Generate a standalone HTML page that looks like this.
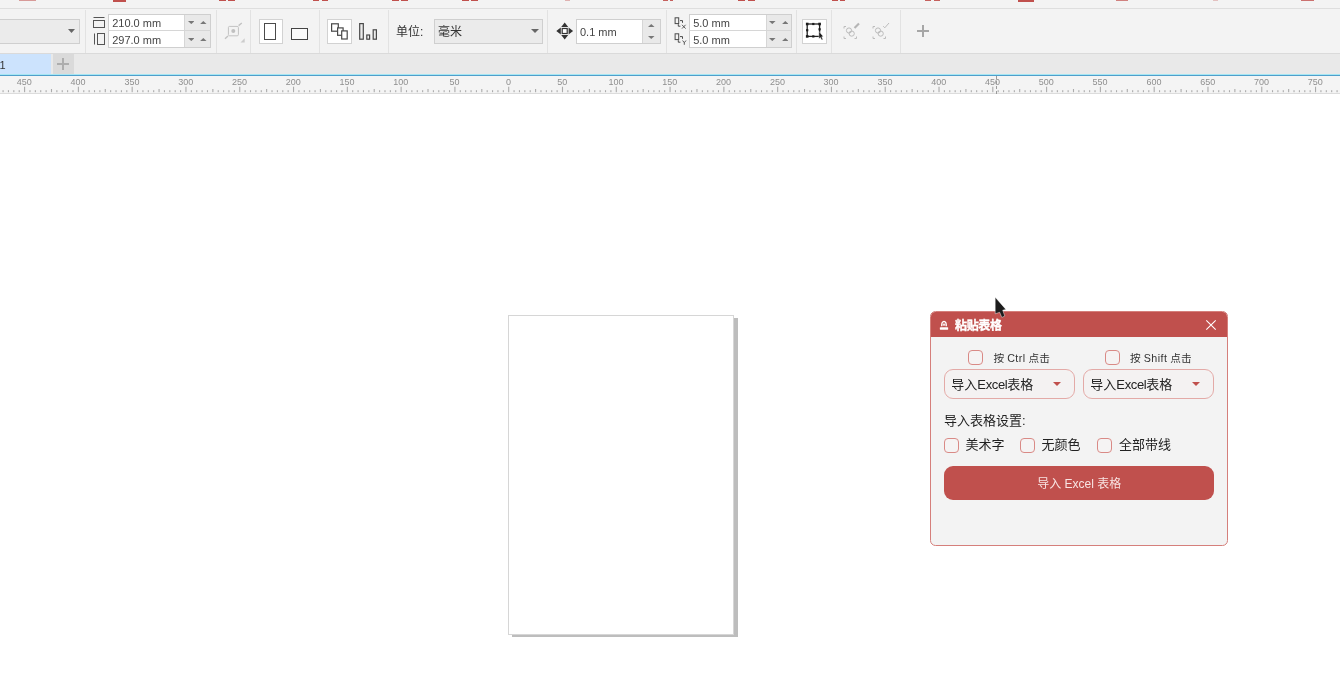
<!DOCTYPE html>
<html lang="zh-CN">
<head>
<meta charset="utf-8">
<title>粘贴表格</title>
<style>
*{box-sizing:border-box;margin:0;padding:0}
html,body{width:1340px;height:686px;overflow:hidden;background:#fff}
body{position:relative;font-family:"Liberation Sans","Noto Sans CJK SC",sans-serif;color:#333;font-size:12px}
.abs{position:absolute}
#root{left:0;top:0;width:1340px;height:686px;will-change:transform}
#top{left:0;top:0;width:1340px;height:53px;background:#f3f3f3}
#topline{left:0;top:8px;width:1340px;height:1px;background:#dedede}
#tbline{left:0;top:53px;width:1340px;height:1px;background:#dadada}
.red{top:0;height:2px;background:#c0504d}
.sep{top:10px;width:1px;height:43px;background:#e2e2e2}
#tabs{left:0;top:54px;width:1340px;height:20px;background:#e9e9e9}
#tab1{left:0;top:54px;width:51px;height:20px;background:#cce3fd}
#tabplus{left:53px;top:54px;width:21px;height:20px;background:#dadada}
#blue1{left:0;top:74px;width:1340px;height:1px;background:#a6e6f3}
#blue2{left:0;top:75px;width:1340px;height:1px;background:#4f9fcb}
#ruler{left:0;top:76px;width:1340px;height:18px;background:#f4f4f4;border-bottom:1px solid #dcdcdc}
.rl{top:76.5px;width:30px;text-align:center;font-size:9px;line-height:10px;color:#8e8e8e}
.combo{background:#ebebeb;border:1px solid #cfcfcf}
.inp{background:#fff;border:1px solid #cfcfcf}
.spin{background:#e9e9e9;border:1px solid #cfcfcf}
.tt{font-size:11px;line-height:12px;color:#444;white-space:nowrap}
.selbtn{background:#fff;border:1px solid #d2d2d2}
/* page */
#pshadow1{left:734.3px;top:317.7px;width:4px;height:319.2px;background:#bdbdbd}
#pshadow2{left:512.3px;top:634.4px;width:226px;height:2.8px;background:#bdbdbd}
#page{left:507.7px;top:314.5px;width:226.6px;height:320px;background:#fff;border:1px solid #d6d6d6}
/* dialog */
#dlg{left:930px;top:311px;width:298px;height:234.6px;border:1px solid #d57f7b;border-radius:5.5px;background:#f3f3f3;overflow:hidden}
#dlgtitle{left:0;top:0;width:298px;height:25.2px;background:#c0504d}
#dlgtitle .t{left:24px;top:7.3px;letter-spacing:-0.35px;-webkit-text-stroke:0.35px #fff;font-size:12px;line-height:14px;font-weight:bold;color:#fff;white-space:nowrap}
.cb{width:15px;height:15px;border:1px solid #d98a86;border-radius:4px;background:#f5f3f3}
.dsel{height:30.3px;width:131px;border:1px solid #e3aaa7;border-radius:9px;background:#f4f2f2}
.dsel .t{left:6.3px;top:6.4px;font-size:13px;line-height:16px;color:#222;white-space:nowrap}
.dsel .a{left:107.8px;top:11.8px;width:0;height:0;border-left:4.3px solid transparent;border-right:4.3px solid transparent;border-top:4.6px solid #c0504d}
.l10{font-size:10.7px;line-height:12px;color:#333;white-space:nowrap}
.l13{font-size:13px;line-height:16px;color:#222;white-space:nowrap}
#btn{left:13px;top:154.2px;width:270.3px;height:34.1px;border-radius:9px;background:#c0504d;color:#f8e4e3;font-size:12px;line-height:36.4px;text-align:center;white-space:nowrap}
.en{letter-spacing:-0.35px}
.en2{letter-spacing:0.45px}
</style>
</head>
<body>
<div id="root" class="abs">
<div id="top" class="abs"></div>
<div id="topline" class="abs"></div>
<div id="tbline" class="abs"></div>
<div class="abs red" style="left:19px;width:17px;height:1px;opacity:0.55"></div>
<div class="abs red" style="left:113px;width:13px;height:1.6px;opacity:1"></div>
<div class="abs red" style="left:219px;width:7px;height:1px;opacity:1"></div>
<div class="abs red" style="left:228px;width:7px;height:1px;opacity:1"></div>
<div class="abs red" style="left:313px;width:6px;height:1px;opacity:1"></div>
<div class="abs red" style="left:322px;width:6px;height:1px;opacity:1"></div>
<div class="abs red" style="left:392px;width:7px;height:1px;opacity:1"></div>
<div class="abs red" style="left:401px;width:7px;height:1px;opacity:1"></div>
<div class="abs red" style="left:462px;width:7px;height:1px;opacity:1"></div>
<div class="abs red" style="left:471px;width:7px;height:1px;opacity:1"></div>
<div class="abs red" style="left:565px;width:5px;height:1px;opacity:0.4"></div>
<div class="abs red" style="left:663px;width:5px;height:1px;opacity:0.9"></div>
<div class="abs red" style="left:670px;width:3px;height:1px;opacity:0.9"></div>
<div class="abs red" style="left:738px;width:7px;height:1px;opacity:1"></div>
<div class="abs red" style="left:748px;width:7px;height:1px;opacity:1"></div>
<div class="abs red" style="left:832px;width:6px;height:1px;opacity:1"></div>
<div class="abs red" style="left:840px;width:5px;height:1px;opacity:1"></div>
<div class="abs red" style="left:925px;width:6px;height:1px;opacity:0.9"></div>
<div class="abs red" style="left:934px;width:6px;height:1px;opacity:0.9"></div>
<div class="abs red" style="left:1018px;width:16px;height:1.6px;opacity:1"></div>
<div class="abs red" style="left:1116px;width:12px;height:1.3px;opacity:0.7"></div>
<div class="abs red" style="left:1213px;width:5px;height:1px;opacity:0.3"></div>
<div class="abs red" style="left:1301px;width:13px;height:1.3px;opacity:0.8"></div>

<div class="abs sep" style="left:85px"></div>
<div class="abs sep" style="left:216px"></div>
<div class="abs sep" style="left:250px"></div>
<div class="abs sep" style="left:319px"></div>
<div class="abs sep" style="left:388px"></div>
<div class="abs sep" style="left:547px"></div>
<div class="abs sep" style="left:666px"></div>
<div class="abs sep" style="left:796px"></div>
<div class="abs sep" style="left:831px"></div>
<div class="abs sep" style="left:900px"></div>
<div class="abs combo" style="left:-2px;top:19px;width:82px;height:25px"></div>
<svg class="abs" style="left:68px;top:29px" width="7" height="4" viewBox="0 0 7 4"><path d="M0 0H7L3.5 4Z" fill="#666"/></svg>
<svg class="abs" style="left:92px;top:15px" width="15" height="31" viewBox="0 0 15 31" fill="none" stroke="#555" stroke-width="1">
<path d="M1.5 2.5H12.5"/><rect x="1.5" y="5.5" width="11" height="7"/>
<path d="M2.5 18.5V29.5"/><rect x="5.5" y="18.5" width="7" height="11"/></svg>
<div class="abs inp" style="left:107.5px;top:14px;width:103.5px;height:34px"></div>
<div class="abs" style="left:184.0px;top:15px;width:26px;height:32px;background:#e9e9e9;border-left:1px solid #d6d6d6"></div>
<div class="abs" style="left:107.5px;top:30px;width:103.5px;height:1px;background:#d6d6d6"></div>
<div class="abs tt" style="left:112.2px;top:17px">210.0 mm</div>
<div class="abs tt" style="left:112.2px;top:34px">297.0 mm</div>
<svg class="abs" style="left:187.5px;top:21px" width="6.6" height="3.1" viewBox="0 0 6.6 3.1"><path d="M0 0H6.6L3.3 3.1Z" fill="#777"/></svg>
<svg class="abs" style="left:200.0px;top:21px" width="6.6" height="3.1" viewBox="0 0 6.6 3.1"><path d="M0 3.1H6.6L3.3 0Z" fill="#777"/></svg>
<svg class="abs" style="left:187.5px;top:38px" width="6.6" height="3.1" viewBox="0 0 6.6 3.1"><path d="M0 0H6.6L3.3 3.1Z" fill="#777"/></svg>
<svg class="abs" style="left:200.0px;top:38px" width="6.6" height="3.1" viewBox="0 0 6.6 3.1"><path d="M0 3.1H6.6L3.3 0Z" fill="#777"/></svg>
<svg class="abs" style="left:224px;top:21px" width="23" height="23" viewBox="0 0 23 23" fill="none" stroke="#c2c2c2" stroke-width="1">
<rect x="4.4" y="5.4" width="10" height="9.4" rx="1.2"/><circle cx="9.3" cy="10" r="2" fill="#c0c0c0" stroke="none"/>
<path d="M1 17.8L4 15M14.6 4.6L17.8 2" stroke-width="1.4"/><path d="M20.7 17.3V21.4H16.5Z" fill="#cccccc" stroke="none"/></svg>
<div class="abs selbtn" style="left:258.5px;top:19px;width:24.5px;height:25px"></div>
<div class="abs" style="left:264px;top:22.5px;width:12px;height:17.5px;border:1.3px solid #4a4a4a;background:#fff"></div>
<div class="abs" style="left:290.5px;top:28px;width:17.5px;height:11.5px;border:1.3px solid #444;background:#fafafa"></div>
<div class="abs selbtn" style="left:327px;top:19px;width:25px;height:25px"></div>
<svg class="abs" style="left:329px;top:21px" width="50" height="21" viewBox="0 0 50 21" fill="#fff" stroke="#484848" stroke-width="1.2">
<rect x="2.6" y="2.8" width="6.7" height="7.4"/><rect x="8.6" y="6.9" width="5.5" height="7.4"/><rect x="12.7" y="9.9" width="5.5" height="8.1"/>
<rect x="30.7" y="2.6" width="3.6" height="15.6" fill="#ececec"/><rect x="37.8" y="14" width="2.8" height="4.2" fill="#ececec"/><rect x="44.2" y="8.8" width="3.2" height="9.4" fill="#ececec"/></svg>
<div class="abs" style="left:396px;top:25px;font-size:12px;line-height:14px;color:#333;white-space:nowrap">单位:</div>
<div class="abs combo" style="left:434px;top:19px;width:109px;height:25px"></div>
<div class="abs" style="left:438px;top:25px;font-size:12px;line-height:14px;color:#333;white-space:nowrap">毫米</div>
<svg class="abs" style="left:530.5px;top:29px" width="8" height="4" viewBox="0 0 8 4"><path d="M0 0H8L4.0 4Z" fill="#666"/></svg>
<svg class="abs" style="left:556px;top:22px" width="18" height="18" viewBox="0 0 18 18">
<path d="M8.7 0.5L12.2 5H5.2Z M8.7 17.5L12.2 13H5.2Z M0.3 9L4.8 5.5V12.5Z M17.1 9L12.6 5.5V12.5Z" fill="#333"/>
<rect x="6.2" y="6.5" width="5" height="5" fill="#fff" stroke="#333" stroke-width="1.2"/></svg>
<div class="abs inp" style="left:575.5px;top:19px;width:85.5px;height:25px"></div>
<div class="abs" style="left:642px;top:20px;width:18px;height:23px;background:#e9e9e9;border-left:1px solid #d6d6d6"></div>
<div class="abs tt" style="left:580px;top:25.5px">0.1 mm</div>
<svg class="abs" style="left:648px;top:24.3px" width="6.5" height="3" viewBox="0 0 6.5 3"><path d="M0 3H6.5L3.25 0Z" fill="#777"/></svg>
<svg class="abs" style="left:648px;top:36.2px" width="6.5" height="3" viewBox="0 0 6.5 3"><path d="M0 0H6.5L3.25 3Z" fill="#777"/></svg>
<svg class="abs" style="left:673px;top:15px" width="15" height="32" viewBox="0 0 15 32" fill="none" stroke="#4a4a4a" stroke-width="1">
<rect x="2.1" y="2.8" width="3.6" height="5.8"/><path d="M7 5.6H9.5V7.8M5.3 9.2V11.2H7.4"/>
<path d="M9 9.8L12.6 13.6M12.6 9.8L9 13.6" stroke-width="0.9"/>
<rect x="2.1" y="18.8" width="3.6" height="5.8"/><path d="M7 21.6H9.5V23.8M5.3 25.2V27.2H7.4"/>
<path d="M9.6 25.5L11.3 27.7L13 25.5M11.3 27.7V29.8" stroke-width="0.9"/></svg>
<div class="abs inp" style="left:689px;top:14px;width:103.0px;height:34px"></div>
<div class="abs" style="left:765.5px;top:15px;width:25.5px;height:32px;background:#e9e9e9;border-left:1px solid #d6d6d6"></div>
<div class="abs" style="left:689px;top:30px;width:103.0px;height:1px;background:#d6d6d6"></div>
<div class="abs tt" style="left:693.2px;top:17px">5.0 mm</div>
<div class="abs tt" style="left:693.2px;top:34px">5.0 mm</div>
<svg class="abs" style="left:769.0px;top:21px" width="6.6" height="3.1" viewBox="0 0 6.6 3.1"><path d="M0 0H6.6L3.3 3.1Z" fill="#777"/></svg>
<svg class="abs" style="left:781.5px;top:21px" width="6.6" height="3.1" viewBox="0 0 6.6 3.1"><path d="M0 3.1H6.6L3.3 0Z" fill="#777"/></svg>
<svg class="abs" style="left:769.0px;top:38px" width="6.6" height="3.1" viewBox="0 0 6.6 3.1"><path d="M0 0H6.6L3.3 3.1Z" fill="#777"/></svg>
<svg class="abs" style="left:781.5px;top:38px" width="6.6" height="3.1" viewBox="0 0 6.6 3.1"><path d="M0 3.1H6.6L3.3 0Z" fill="#777"/></svg>
<div class="abs selbtn" style="left:802px;top:19px;width:25px;height:25px"></div>
<svg class="abs" style="left:805px;top:22px" width="20" height="20" viewBox="0 0 20 20">
<rect x="2.2" y="2" width="12.4" height="12.4" fill="#fff" stroke="#222" stroke-width="1.3"/>
<g fill="#1a1a1a"><rect x="0.9" y="0.7" width="2.6" height="2.6"/><rect x="13.3" y="0.7" width="2.6" height="2.6"/><rect x="0.9" y="13.1" width="2.6" height="2.6"/>
<rect x="7.2" y="0.9" width="2.2" height="2.2"/><rect x="7.2" y="13.3" width="2.2" height="2.2"/><rect x="1.1" y="7.1" width="2.2" height="2.2"/><rect x="13.5" y="6.2" width="2.2" height="2.2"/>
<path d="M13.9 9.4L18.3 14.5L16.7 14.8L17.9 17.4L16.7 18L15.4 15.5L13.9 16.8Z" stroke="#fff" stroke-width="0.4"/></g></svg>
<svg class="abs" style="left:843px;top:22px" width="19" height="19" viewBox="0 0 19 19" fill="none" stroke="#bcbcbc" stroke-width="1">
<path d="M1 6.5V4.5H3M1 14.5V16.5H3M13.5 16.5H11.5M13.5 14.5V16.5"/>
<circle cx="6" cy="8.5" r="2.6"/><circle cx="8.7" cy="11.6" r="2.6"/><path d="M11.5 6L16 1.5" stroke-width="2.2" stroke="#b5b5b5"/></svg>
<svg class="abs" style="left:871.5px;top:22px" width="19" height="19" viewBox="0 0 19 19" fill="none" stroke="#bcbcbc" stroke-width="1">
<path d="M1 6.5V4.5H3M1 14.5V16.5H3M13.5 16.5H11.5M13.5 14.5V16.5"/>
<circle cx="6" cy="8.5" r="2.6"/><circle cx="8.7" cy="11.6" r="2.6"/><path d="M11.2 4.2L12.8 5.8L17 1" /></svg>
<div class="abs" style="left:917.3px;top:29.9px;width:11.6px;height:1.8px;background:#a6a6a6"></div>
<div class="abs" style="left:922.2px;top:25px;width:1.8px;height:11.6px;background:#a6a6a6"></div>

<div id="tabs" class="abs"></div>
<div id="tab1" class="abs"></div>
<div id="tabplus" class="abs"></div>
<div class="abs" style="left:-0.6px;top:59px;font-size:11px;line-height:12px;color:#333">1</div>
<div class="abs" style="left:57.1px;top:63.1px;width:11.6px;height:1.9px;background:#adadad"></div>
<div class="abs" style="left:62px;top:58.2px;width:1.9px;height:11.6px;background:#adadad"></div>

<div id="blue1" class="abs"></div>
<div id="blue2" class="abs"></div>
<div id="ruler" class="abs"></div>
<svg class="abs" style="left:0;top:76px" width="1340" height="17" viewBox="0 0 1340 17" fill="#ababab"><rect x="2.52" y="14.2" width="1.1" height="2"/><rect x="7.90" y="14.2" width="1.1" height="2"/><rect x="13.28" y="14.2" width="1.1" height="2"/><rect x="18.66" y="14.2" width="1.1" height="2"/><rect x="24.04" y="10.7" width="1.1" height="5.5"/><rect x="29.42" y="14.2" width="1.1" height="2"/><rect x="34.80" y="14.2" width="1.1" height="2"/><rect x="40.18" y="14.2" width="1.1" height="2"/><rect x="45.56" y="14.2" width="1.1" height="2"/><rect x="50.94" y="13.0" width="1.1" height="3.2"/><rect x="56.31" y="14.2" width="1.1" height="2"/><rect x="61.69" y="14.2" width="1.1" height="2"/><rect x="67.07" y="14.2" width="1.1" height="2"/><rect x="72.45" y="14.2" width="1.1" height="2"/><rect x="77.83" y="10.7" width="1.1" height="5.5"/><rect x="83.21" y="14.2" width="1.1" height="2"/><rect x="88.59" y="14.2" width="1.1" height="2"/><rect x="93.97" y="14.2" width="1.1" height="2"/><rect x="99.35" y="14.2" width="1.1" height="2"/><rect x="104.72" y="13.0" width="1.1" height="3.2"/><rect x="110.10" y="14.2" width="1.1" height="2"/><rect x="115.48" y="14.2" width="1.1" height="2"/><rect x="120.86" y="14.2" width="1.1" height="2"/><rect x="126.24" y="14.2" width="1.1" height="2"/><rect x="131.62" y="10.7" width="1.1" height="5.5"/><rect x="137.00" y="14.2" width="1.1" height="2"/><rect x="142.38" y="14.2" width="1.1" height="2"/><rect x="147.76" y="14.2" width="1.1" height="2"/><rect x="153.14" y="14.2" width="1.1" height="2"/><rect x="158.51" y="13.0" width="1.1" height="3.2"/><rect x="163.89" y="14.2" width="1.1" height="2"/><rect x="169.27" y="14.2" width="1.1" height="2"/><rect x="174.65" y="14.2" width="1.1" height="2"/><rect x="180.03" y="14.2" width="1.1" height="2"/><rect x="185.41" y="10.7" width="1.1" height="5.5"/><rect x="190.79" y="14.2" width="1.1" height="2"/><rect x="196.17" y="14.2" width="1.1" height="2"/><rect x="201.55" y="14.2" width="1.1" height="2"/><rect x="206.93" y="14.2" width="1.1" height="2"/><rect x="212.31" y="13.0" width="1.1" height="3.2"/><rect x="217.68" y="14.2" width="1.1" height="2"/><rect x="223.06" y="14.2" width="1.1" height="2"/><rect x="228.44" y="14.2" width="1.1" height="2"/><rect x="233.82" y="14.2" width="1.1" height="2"/><rect x="239.20" y="10.7" width="1.1" height="5.5"/><rect x="244.58" y="14.2" width="1.1" height="2"/><rect x="249.96" y="14.2" width="1.1" height="2"/><rect x="255.34" y="14.2" width="1.1" height="2"/><rect x="260.72" y="14.2" width="1.1" height="2"/><rect x="266.09" y="13.0" width="1.1" height="3.2"/><rect x="271.47" y="14.2" width="1.1" height="2"/><rect x="276.85" y="14.2" width="1.1" height="2"/><rect x="282.23" y="14.2" width="1.1" height="2"/><rect x="287.61" y="14.2" width="1.1" height="2"/><rect x="292.99" y="10.7" width="1.1" height="5.5"/><rect x="298.37" y="14.2" width="1.1" height="2"/><rect x="303.75" y="14.2" width="1.1" height="2"/><rect x="309.13" y="14.2" width="1.1" height="2"/><rect x="314.51" y="14.2" width="1.1" height="2"/><rect x="319.88" y="13.0" width="1.1" height="3.2"/><rect x="325.26" y="14.2" width="1.1" height="2"/><rect x="330.64" y="14.2" width="1.1" height="2"/><rect x="336.02" y="14.2" width="1.1" height="2"/><rect x="341.40" y="14.2" width="1.1" height="2"/><rect x="346.78" y="10.7" width="1.1" height="5.5"/><rect x="352.16" y="14.2" width="1.1" height="2"/><rect x="357.54" y="14.2" width="1.1" height="2"/><rect x="362.92" y="14.2" width="1.1" height="2"/><rect x="368.30" y="14.2" width="1.1" height="2"/><rect x="373.68" y="13.0" width="1.1" height="3.2"/><rect x="379.05" y="14.2" width="1.1" height="2"/><rect x="384.43" y="14.2" width="1.1" height="2"/><rect x="389.81" y="14.2" width="1.1" height="2"/><rect x="395.19" y="14.2" width="1.1" height="2"/><rect x="400.57" y="10.7" width="1.1" height="5.5"/><rect x="405.95" y="14.2" width="1.1" height="2"/><rect x="411.33" y="14.2" width="1.1" height="2"/><rect x="416.71" y="14.2" width="1.1" height="2"/><rect x="422.09" y="14.2" width="1.1" height="2"/><rect x="427.46" y="13.0" width="1.1" height="3.2"/><rect x="432.84" y="14.2" width="1.1" height="2"/><rect x="438.22" y="14.2" width="1.1" height="2"/><rect x="443.60" y="14.2" width="1.1" height="2"/><rect x="448.98" y="14.2" width="1.1" height="2"/><rect x="454.36" y="10.7" width="1.1" height="5.5"/><rect x="459.74" y="14.2" width="1.1" height="2"/><rect x="465.12" y="14.2" width="1.1" height="2"/><rect x="470.50" y="14.2" width="1.1" height="2"/><rect x="475.88" y="14.2" width="1.1" height="2"/><rect x="481.25" y="13.0" width="1.1" height="3.2"/><rect x="486.63" y="14.2" width="1.1" height="2"/><rect x="492.01" y="14.2" width="1.1" height="2"/><rect x="497.39" y="14.2" width="1.1" height="2"/><rect x="502.77" y="14.2" width="1.1" height="2"/><rect x="508.15" y="10.7" width="1.1" height="5.5"/><rect x="513.53" y="14.2" width="1.1" height="2"/><rect x="518.91" y="14.2" width="1.1" height="2"/><rect x="524.29" y="14.2" width="1.1" height="2"/><rect x="529.67" y="14.2" width="1.1" height="2"/><rect x="535.05" y="13.0" width="1.1" height="3.2"/><rect x="540.42" y="14.2" width="1.1" height="2"/><rect x="545.80" y="14.2" width="1.1" height="2"/><rect x="551.18" y="14.2" width="1.1" height="2"/><rect x="556.56" y="14.2" width="1.1" height="2"/><rect x="561.94" y="10.7" width="1.1" height="5.5"/><rect x="567.32" y="14.2" width="1.1" height="2"/><rect x="572.70" y="14.2" width="1.1" height="2"/><rect x="578.08" y="14.2" width="1.1" height="2"/><rect x="583.46" y="14.2" width="1.1" height="2"/><rect x="588.84" y="13.0" width="1.1" height="3.2"/><rect x="594.21" y="14.2" width="1.1" height="2"/><rect x="599.59" y="14.2" width="1.1" height="2"/><rect x="604.97" y="14.2" width="1.1" height="2"/><rect x="610.35" y="14.2" width="1.1" height="2"/><rect x="615.73" y="10.7" width="1.1" height="5.5"/><rect x="621.11" y="14.2" width="1.1" height="2"/><rect x="626.49" y="14.2" width="1.1" height="2"/><rect x="631.87" y="14.2" width="1.1" height="2"/><rect x="637.25" y="14.2" width="1.1" height="2"/><rect x="642.62" y="13.0" width="1.1" height="3.2"/><rect x="648.00" y="14.2" width="1.1" height="2"/><rect x="653.38" y="14.2" width="1.1" height="2"/><rect x="658.76" y="14.2" width="1.1" height="2"/><rect x="664.14" y="14.2" width="1.1" height="2"/><rect x="669.52" y="10.7" width="1.1" height="5.5"/><rect x="674.90" y="14.2" width="1.1" height="2"/><rect x="680.28" y="14.2" width="1.1" height="2"/><rect x="685.66" y="14.2" width="1.1" height="2"/><rect x="691.04" y="14.2" width="1.1" height="2"/><rect x="696.41" y="13.0" width="1.1" height="3.2"/><rect x="701.79" y="14.2" width="1.1" height="2"/><rect x="707.17" y="14.2" width="1.1" height="2"/><rect x="712.55" y="14.2" width="1.1" height="2"/><rect x="717.93" y="14.2" width="1.1" height="2"/><rect x="723.31" y="10.7" width="1.1" height="5.5"/><rect x="728.69" y="14.2" width="1.1" height="2"/><rect x="734.07" y="14.2" width="1.1" height="2"/><rect x="739.45" y="14.2" width="1.1" height="2"/><rect x="744.83" y="14.2" width="1.1" height="2"/><rect x="750.21" y="13.0" width="1.1" height="3.2"/><rect x="755.58" y="14.2" width="1.1" height="2"/><rect x="760.96" y="14.2" width="1.1" height="2"/><rect x="766.34" y="14.2" width="1.1" height="2"/><rect x="771.72" y="14.2" width="1.1" height="2"/><rect x="777.10" y="10.7" width="1.1" height="5.5"/><rect x="782.48" y="14.2" width="1.1" height="2"/><rect x="787.86" y="14.2" width="1.1" height="2"/><rect x="793.24" y="14.2" width="1.1" height="2"/><rect x="798.62" y="14.2" width="1.1" height="2"/><rect x="804.00" y="13.0" width="1.1" height="3.2"/><rect x="809.37" y="14.2" width="1.1" height="2"/><rect x="814.75" y="14.2" width="1.1" height="2"/><rect x="820.13" y="14.2" width="1.1" height="2"/><rect x="825.51" y="14.2" width="1.1" height="2"/><rect x="830.89" y="10.7" width="1.1" height="5.5"/><rect x="836.27" y="14.2" width="1.1" height="2"/><rect x="841.65" y="14.2" width="1.1" height="2"/><rect x="847.03" y="14.2" width="1.1" height="2"/><rect x="852.41" y="14.2" width="1.1" height="2"/><rect x="857.79" y="13.0" width="1.1" height="3.2"/><rect x="863.16" y="14.2" width="1.1" height="2"/><rect x="868.54" y="14.2" width="1.1" height="2"/><rect x="873.92" y="14.2" width="1.1" height="2"/><rect x="879.30" y="14.2" width="1.1" height="2"/><rect x="884.68" y="10.7" width="1.1" height="5.5"/><rect x="890.06" y="14.2" width="1.1" height="2"/><rect x="895.44" y="14.2" width="1.1" height="2"/><rect x="900.82" y="14.2" width="1.1" height="2"/><rect x="906.20" y="14.2" width="1.1" height="2"/><rect x="911.58" y="13.0" width="1.1" height="3.2"/><rect x="916.95" y="14.2" width="1.1" height="2"/><rect x="922.33" y="14.2" width="1.1" height="2"/><rect x="927.71" y="14.2" width="1.1" height="2"/><rect x="933.09" y="14.2" width="1.1" height="2"/><rect x="938.47" y="10.7" width="1.1" height="5.5"/><rect x="943.85" y="14.2" width="1.1" height="2"/><rect x="949.23" y="14.2" width="1.1" height="2"/><rect x="954.61" y="14.2" width="1.1" height="2"/><rect x="959.99" y="14.2" width="1.1" height="2"/><rect x="965.37" y="13.0" width="1.1" height="3.2"/><rect x="970.74" y="14.2" width="1.1" height="2"/><rect x="976.12" y="14.2" width="1.1" height="2"/><rect x="981.50" y="14.2" width="1.1" height="2"/><rect x="986.88" y="14.2" width="1.1" height="2"/><rect x="992.26" y="10.7" width="1.1" height="5.5"/><rect x="997.64" y="14.2" width="1.1" height="2"/><rect x="1003.02" y="14.2" width="1.1" height="2"/><rect x="1008.40" y="14.2" width="1.1" height="2"/><rect x="1013.78" y="14.2" width="1.1" height="2"/><rect x="1019.15" y="13.0" width="1.1" height="3.2"/><rect x="1024.53" y="14.2" width="1.1" height="2"/><rect x="1029.91" y="14.2" width="1.1" height="2"/><rect x="1035.29" y="14.2" width="1.1" height="2"/><rect x="1040.67" y="14.2" width="1.1" height="2"/><rect x="1046.05" y="10.7" width="1.1" height="5.5"/><rect x="1051.43" y="14.2" width="1.1" height="2"/><rect x="1056.81" y="14.2" width="1.1" height="2"/><rect x="1062.19" y="14.2" width="1.1" height="2"/><rect x="1067.57" y="14.2" width="1.1" height="2"/><rect x="1072.94" y="13.0" width="1.1" height="3.2"/><rect x="1078.32" y="14.2" width="1.1" height="2"/><rect x="1083.70" y="14.2" width="1.1" height="2"/><rect x="1089.08" y="14.2" width="1.1" height="2"/><rect x="1094.46" y="14.2" width="1.1" height="2"/><rect x="1099.84" y="10.7" width="1.1" height="5.5"/><rect x="1105.22" y="14.2" width="1.1" height="2"/><rect x="1110.60" y="14.2" width="1.1" height="2"/><rect x="1115.98" y="14.2" width="1.1" height="2"/><rect x="1121.36" y="14.2" width="1.1" height="2"/><rect x="1126.73" y="13.0" width="1.1" height="3.2"/><rect x="1132.11" y="14.2" width="1.1" height="2"/><rect x="1137.49" y="14.2" width="1.1" height="2"/><rect x="1142.87" y="14.2" width="1.1" height="2"/><rect x="1148.25" y="14.2" width="1.1" height="2"/><rect x="1153.63" y="10.7" width="1.1" height="5.5"/><rect x="1159.01" y="14.2" width="1.1" height="2"/><rect x="1164.39" y="14.2" width="1.1" height="2"/><rect x="1169.77" y="14.2" width="1.1" height="2"/><rect x="1175.15" y="14.2" width="1.1" height="2"/><rect x="1180.53" y="13.0" width="1.1" height="3.2"/><rect x="1185.90" y="14.2" width="1.1" height="2"/><rect x="1191.28" y="14.2" width="1.1" height="2"/><rect x="1196.66" y="14.2" width="1.1" height="2"/><rect x="1202.04" y="14.2" width="1.1" height="2"/><rect x="1207.42" y="10.7" width="1.1" height="5.5"/><rect x="1212.80" y="14.2" width="1.1" height="2"/><rect x="1218.18" y="14.2" width="1.1" height="2"/><rect x="1223.56" y="14.2" width="1.1" height="2"/><rect x="1228.94" y="14.2" width="1.1" height="2"/><rect x="1234.32" y="13.0" width="1.1" height="3.2"/><rect x="1239.69" y="14.2" width="1.1" height="2"/><rect x="1245.07" y="14.2" width="1.1" height="2"/><rect x="1250.45" y="14.2" width="1.1" height="2"/><rect x="1255.83" y="14.2" width="1.1" height="2"/><rect x="1261.21" y="10.7" width="1.1" height="5.5"/><rect x="1266.59" y="14.2" width="1.1" height="2"/><rect x="1271.97" y="14.2" width="1.1" height="2"/><rect x="1277.35" y="14.2" width="1.1" height="2"/><rect x="1282.73" y="14.2" width="1.1" height="2"/><rect x="1288.11" y="13.0" width="1.1" height="3.2"/><rect x="1293.48" y="14.2" width="1.1" height="2"/><rect x="1298.86" y="14.2" width="1.1" height="2"/><rect x="1304.24" y="14.2" width="1.1" height="2"/><rect x="1309.62" y="14.2" width="1.1" height="2"/><rect x="1315.00" y="10.7" width="1.1" height="5.5"/><rect x="1320.38" y="14.2" width="1.1" height="2"/><rect x="1325.76" y="14.2" width="1.1" height="2"/><rect x="1331.14" y="14.2" width="1.1" height="2"/><rect x="1336.52" y="14.2" width="1.1" height="2"/></svg>
<div class="abs rl" style="left:9.3px">450</div>
<div class="abs rl" style="left:63.1px">400</div>
<div class="abs rl" style="left:116.9px">350</div>
<div class="abs rl" style="left:170.7px">300</div>
<div class="abs rl" style="left:224.4px">250</div>
<div class="abs rl" style="left:278.2px">200</div>
<div class="abs rl" style="left:332.0px">150</div>
<div class="abs rl" style="left:385.8px">100</div>
<div class="abs rl" style="left:439.6px">50</div>
<div class="abs rl" style="left:493.4px">0</div>
<div class="abs rl" style="left:547.2px">50</div>
<div class="abs rl" style="left:601.0px">100</div>
<div class="abs rl" style="left:654.8px">150</div>
<div class="abs rl" style="left:708.6px">200</div>
<div class="abs rl" style="left:762.4px">250</div>
<div class="abs rl" style="left:816.1px">300</div>
<div class="abs rl" style="left:869.9px">350</div>
<div class="abs rl" style="left:923.7px">400</div>
<div class="abs rl" style="left:977.5px">450</div>
<div class="abs rl" style="left:1031.3px">500</div>
<div class="abs rl" style="left:1085.1px">550</div>
<div class="abs rl" style="left:1138.9px">600</div>
<div class="abs rl" style="left:1192.7px">650</div>
<div class="abs rl" style="left:1246.5px">700</div>
<div class="abs rl" style="left:1300.2px">750</div>
<div class="abs" style="left:996px;top:76px;width:0;height:18px;border-left:1px dashed #9a9a9a"></div>

<div id="pshadow1" class="abs"></div>
<div id="pshadow2" class="abs"></div>
<div id="page" class="abs"></div>
<div id="dlg" class="abs">
<div id="dlgtitle" class="abs">
<svg class="abs" style="left:8px;top:7.6px" width="10" height="10.4" viewBox="0 0 10 11" fill="#fff">
<path d="M1.9 6.6C1.6 3.2 2.8 0.8 5 0.8S8.4 3.2 8.1 6.6H6.7C7 4.6 6.6 2.4 5 2.4S3 4.6 3.3 6.6Z"/><rect x="0.6" y="7.6" width="8.8" height="2.6" rx="0.5"/><rect x="3.5" y="3.8" width="3" height="2.2" opacity="0.85"/></svg>
<div class="abs t">粘贴表格</div>
<svg class="abs" style="left:273.8px;top:7.4px" width="12" height="12" viewBox="0 0 12 12" stroke="#fff" stroke-width="1.1" fill="none"><path d="M1.3 1.3L10.7 10.7M10.7 1.3L1.3 10.7"/></svg>
</div>
<div class="abs cb" style="left:37px;top:37.8px"></div><div class="abs l10" style="left:62.5px;top:40px">按 <span class="en2">Ctrl</span> 点击</div>
<div class="abs cb" style="left:173.7px;top:37.8px"></div><div class="abs l10" style="left:199px;top:40px">按 <span class="en2">Shift</span> 点击</div>
<div class="abs dsel" style="left:13px;top:57.2px"><div class="abs t">导入<span class="en">Excel</span>表格</div><div class="abs a"></div></div>
<div class="abs dsel" style="left:152px;top:57.2px"><div class="abs t">导入<span class="en">Excel</span>表格</div><div class="abs a"></div></div>
<div class="abs l13" style="left:13px;top:101px">导入表格设置:</div>
<div class="abs cb" style="left:13px;top:126px"></div><div class="abs l13" style="left:34.5px;top:125px">美术字</div>
<div class="abs cb" style="left:88.8px;top:126px"></div><div class="abs l13" style="left:110.4px;top:125px">无颜色</div>
<div class="abs cb" style="left:166px;top:126px"></div><div class="abs l13" style="left:188px;top:125px">全部带线</div>
<div id="btn" class="abs">导入 Excel 表格</div>
</div>

<svg class="abs" style="left:990px;top:294px" width="20" height="28" viewBox="0 0 20 28">
<path d="M5.2 3.2L15.9 15.4L12.7 16.2L14.8 22L11.8 23.4L9.7 18.3L5.2 19.8Z" fill="#1c1c1c" stroke="#fff" stroke-opacity="0.55" stroke-width="0.8" stroke-linejoin="round"/></svg>

</div>
</body>
</html>
